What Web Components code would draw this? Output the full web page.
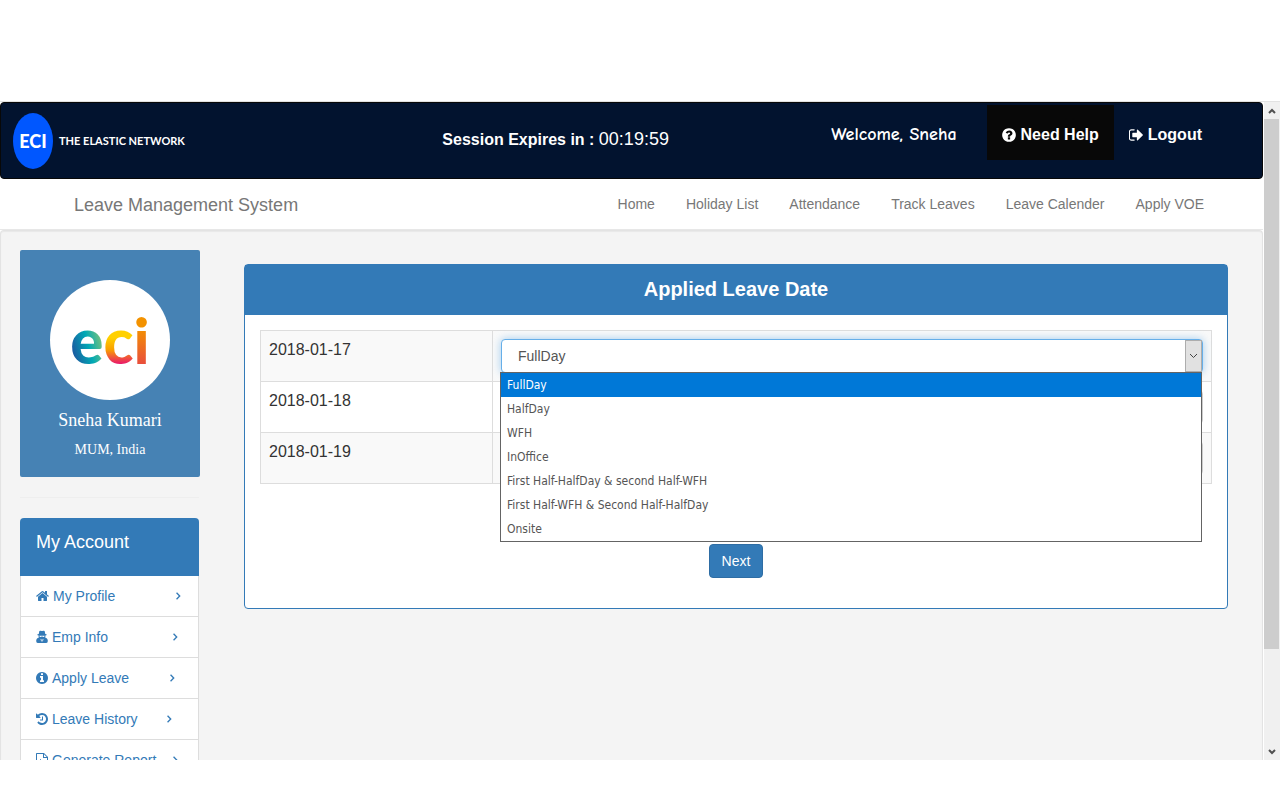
<!DOCTYPE html>
<html lang="en">
<head>
<meta charset="utf-8">
<meta name="viewport" content="width=device-width, initial-scale=1">
<title>Leave Management System</title>
<style>
html, body { margin: 0; height: 100%; background: #fff; }
body { font: 14px/20px "Liberation Sans", Arial, sans-serif; color: #333; }
</style>
</head>
<body>
<app-frame>
  <session-bar></session-bar>
  <main-nav>Leave Management System</main-nav>
  <page-well>
    <profile-card slot="side" name="Sneha Kumari" place="MUM, India"></profile-card>
    <account-menu slot="side">
      <menu-entry icon="home" gap="60">My Profile</menu-entry>
      <menu-entry icon="agent" gap="64">Emp Info</menu-entry>
      <menu-entry icon="info" gap="40">Apply Leave</menu-entry>
      <menu-entry icon="history" gap="28">Leave History</menu-entry>
      <menu-entry icon="file" gap="16">Generate Report</menu-entry>
    </account-menu>
    <title-panel heading="Applied Leave Date">
      <leave-dates></leave-dates>
      <next-button>Next</next-button>
    </title-panel>
  </page-well>
</app-frame>
<script>
const define = (name, render, after) => customElements.define(name, class extends HTMLElement {
  connectedCallback() {
    if (this.shadowRoot) return;
    this.attachShadow({ mode: 'open' }).innerHTML = render(this);
    if (after) after(this.shadowRoot);
  }
});

const disc = 'M1664 896q0 209-103 385.5t-279.5 279.5-385.5 103-385.5-103-279.5-279.5-103-385.5 103-385.5 279.5-279.5 385.5-103 385.5 103 279.5 279.5 103 385.5z';
/* name: [left edge, width, path] on a 1792-unit grid, 128 units to the pixel at 14px */
const icons = {
  help: [128, 1536, 'M1024 1376v-192q0-14-9-23t-23-9h-192q-14 0-23 9t-9 23v192q0 14 9 23t23 9h192q14 0 23-9t9-23zM1280 704q0-88-55.5-163t-138.5-116-170-41q-243 0-371 213-15 24 8 42l132 100q7 6 19 6 16 0 25-12 53-68 86-92 34-24 86-24 48 0 85.5 26t37.5 59q0 38-20 61t-68 45q-63 28-115.5 86.5t-52.5 125.5v36q0 14 9 23t23 9h192q14 0 23-9t9-23q0-19 21.5-49.5t54.5-49.5q32-18 49-28.5t46-35 44.5-48 28-60.5 12.5-81z' + disc],
  logout: [96, 1536, 'M704 1440q0 4 1 20t.5 26.5-3 23.5-10 19.5-20.5 6.5h-320q-119 0-203.500-84.500t-84.500-203.500v-704q0-119 84.500-203.500t203.500-84.500h320q13 0 22.500 9.500t9.500 22.500q0 4 1 20t.5 26.500-3 23.500-10 19.500-20.500 6.500h-320q-66 0-113 47t-47 113v704q0 66 47 113t113 47h312l11.500 1 11.500 3 8 5.500 7 9 2 13.500zM1632 896q0 26-19 45l-544 544q-19 19-45 19t-45-19-19-45v-288h-448q-26 0-45-19t-19-45v-384q0-26 19-45t45-19h448v-288q0-26 19-45t45-19 45 19l544 544q19 19 19 45z'],
  home: [64, 1664, 'M1472 992v480q0 26-19 45t-45 19h-384v-384h-256v384h-384q-26 0-45-19t-19-45v-480q0-1 .5-3t.5-3l575-474 575 474q1 2 1 6zM1695 923l-62 74q-8 9-21 11h-3q-13 0-21-7l-692-577-692 577q-12 8-24 7-13-2-21-11l-62-74q-8-10-7-23.500t11-21.500l719-599q32-26 76-26t76 26l244 204v-195q0-14 9-23t23-9h192q14 0 23 9t9 23v408l219 182q10 8 11 21.500t-7 23.500z'],
  agent: [128, 1536, 'M480 500 L550 150 Q580 60 690 90 L896 130 L1102 90 Q1212 60 1242 150 L1312 500 Q1500 540 1500 600 Q1500 670 1330 700 V870 Q1330 920 1290 960 Q1640 1050 1640 1420 Q1640 1664 1440 1664 H352 Q152 1664 152 1420 Q152 1050 502 960 Q462 920 462 870 V700 Q292 670 292 600 Q292 540 480 500zM560 740Q560 900 720 900Q830 900 850 790H942Q962 900 1072 900Q1232 900 1232 740zM700 1110L800 1520L870 1250zM1092 1110L992 1520L922 1250z'],
  info: [128, 1536, 'M1152 1376v-160q0-14-9-23t-23-9h-96v-512q0-14-9-23t-23-9h-320q-14 0-23 9t-9 23v160q0 14 9 23t23 9h96v320h-96q-14 0-23 9t-9 23v160q0 14 9 23t23 9h448q14 0 23-9t9-23zM1024 480v-160q0-14-9-23t-23-9h-192q-14 0-23 9t-9 23v160q0 14 9 23t23 9h192q14 0 23-9t9-23z' + disc],
  history: [128, 1536, 'M1664 896q0 156-61 298t-164 245-245 164-298 61q-172 0-327-72.500t-264-204.500q-7-10-6.500-22.500t8.500-20.500l137-138q10-9 25-9 16 2 23 12 73 95 179 147t225 52q104 0 198.500-40.500t163.500-109.500 109.500-163.500 40.500-198.500-40.500-198.500-109.500-163.500-163.500-109.500-198.500-40.500q-98 0-188 35.500t-160 101.500l137 138q31 30 14 69-17 40-59 40h-448q-26 0-45-19t-19-45v-448q0-42 40-59 39-17 69 14l130 129q107-101 244.500-156.500t284.500-55.500q156 0 298 61t245 164 164 245 61 298zM1024 608v448q0 14-9 23t-23 9h-320q-14 0-23-9t-9-23v-64q0-14 9-23t23-9h224v-352q0-14 9-23t23-9h64q14 0 23 9t9 23z'],
  file: [128, 1536, 'M224 0H1150L1664 514V1696Q1664 1792 1568 1792H224Q128 1792 128 1696V96Q128 0 224 0zM256 128V1664H1536V640H1024V128zM1152 160V512H1504zM400 1440V1000H528V1440zM640 1440V800H768V1440zM880 1440V1100H1008V1440zM1120 1440V900H1248V1440z'],
  chevron: [512, 768, 'M650 550L770 430L1236 896L770 1362L650 1242L996 896z']
};
const icon = (name, size = 14) => {
  const [x, w, d] = icons[name];
  return `<svg viewBox="${x} 0 ${w} 1792" width="${Math.round(w / 1792 * size)}" height="${size}" fill="currentColor" fill-rule="evenodd" aria-hidden="true"><path d="${d}"/></svg>`;
};

define('app-frame', () => `
  <style>
    :host { display: flex; flex-direction: column; box-sizing: border-box; height: 100vh; padding: 101px 0 40px; }
    .view { flex: 1; min-height: 0; display: grid; grid-template-columns: minmax(0, 1fr) 17px; border-top: 1px solid #e2e2e2; }
    .page { display: flex; flex-direction: column; min-height: 0; overflow: hidden; }
  </style>
  <div class="view"><div class="page"><slot></slot></div><scroll-rail></scroll-rail></div>`);

define('scroll-rail', () => `
  <style>
    :host { display: flex; flex-direction: column; margin-left: 1px; background: #f0f0f0; }
    button { flex: none; height: 17px; padding: 0; border: 0; background: none; display: grid; place-items: center; }
    .track { flex: 1; padding-right: 1px; }
    .thumb { height: 85%; background: #cdcdcd; }
  </style>
  <button aria-label="Scroll up"><svg width="8" height="6"><path d="M1 5L4 2L7 5" fill="none" stroke="#505050" stroke-width="2"/></svg></button>
  <div class="track"><div class="thumb"></div></div>
  <button aria-label="Scroll down"><svg width="8" height="6"><path d="M1 1L4 4L7 1" fill="none" stroke="#505050" stroke-width="2"/></svg></button>`);

define('session-bar', () => `
  <style>
    :host { flex: none; display: grid; grid-template-columns: 35% 1fr auto; box-sizing: border-box; height: 77px;
      border: 1px solid #080808; border-radius: 4px; background: #02132f; color: #fff; }
    .logo { display: flex; align-items: center; gap: 6px; padding-left: 12px; color: #fff; text-decoration: none;
      font: bold 11px/20px Lato, sans-serif; }
    .mark { display: grid; place-items: center; width: 40px; height: 56px; border-radius: 50%; background: #0057ff; font-size: 18px; font-weight: 900; }
    .timer { align-self: center; padding-bottom: 2px; font-weight: bold; font-size: 16px; }
    time { font-weight: normal; font-size: 18px; }
    nav { display: flex; align-items: flex-start; padding: 2px 45px 0 0; font-weight: bold; font-size: 16px; }
    nav > * { display: flex; align-items: center; gap: 5px; height: 55px; padding: 4px 15px 0; box-sizing: border-box; color: #fff; text-decoration: none; }
    .hello { margin-right: 15px; font-family: "Comic Sans MS", "Comic Neue", "Open Sans", sans-serif; font-size: 18px; }
    .help { background: #080808; }
  </style>
  <a class="logo" href="#"><span class="mark">ECI</span><span>THE ELASTIC NETWORK</span></a>
  <div class="timer">Session Expires in : <time>00:19:59</time></div>
  <nav><span class="hello">Welcome, Sneha</span><a class="help" href="#">${icon('help', 16)}Need Help</a><a href="#">${icon('logout', 16)}Logout</a></nav>`);

define('main-nav', () => `
  <style>
    :host { flex: none; display: flex; justify-content: space-between; align-items: center; box-sizing: border-box; height: 51px;
      padding: 0 44px 0 59px; border-bottom: 1px solid #e7e7e7; }
    a { padding: 0 15px; color: #777; text-decoration: none; }
    .brand { padding-top: 2px; font-size: 18px; }
    nav { display: flex; gap: 1px; }
  </style>
  <a class="brand" href="#"><slot></slot></a>
  <nav>${['Home', 'Holiday List', 'Attendance', 'Track Leaves', 'Leave Calender', 'Apply VOE'].map(t => `<a href="#">${t}</a>`).join('')}</nav>`);

define('page-well', () => `
  <style>
    :host { flex: 1; min-height: 0; display: flex; align-items: flex-start; box-sizing: border-box; padding: 19px; overflow: hidden;
      border: 1px solid #e3e3e3; border-bottom: 0; border-radius: 4px 4px 0 0; background: #f4f4f4; box-shadow: inset 0 1px 1px rgba(0,0,0,.05); }
    aside { flex: none; width: 180px; }
    main { flex: 1; min-width: 0; margin: 14px 15px 0 44px; }
  </style>
  <aside><slot name="side"></slot></aside><main><slot></slot></main>`);

define('profile-card', el => `
  <style>
    :host { display: block; padding: 30px 0 17px; border-radius: 2px; background: #4682b4; color: #fff; text-align: center;
      font-family: "Liberation Serif", "Times New Roman", serif; }
    .avatar { display: flex; justify-content: center; align-items: center; box-sizing: border-box; width: 120px; height: 120px; margin: 0 auto 10px;
      border-radius: 50%; background: #fff; font: 900 62px/120px Lato, sans-serif; }
    .avatar span { color: transparent; background-clip: text; -webkit-background-clip: text; }
    .e { background-image: linear-gradient(75deg, #23429a 15%, #00a9b5 50%, #b5cf60 85%); }
    .c { background-image: linear-gradient(#ffd000 48%, #f9a000 58%, #e6007e 72%); }
    .i { background-image: linear-gradient(#f39200 40%, #e94e3c 70%); }
    h2, p { margin: 0; font-weight: normal; line-height: 20px; }
    h2 { font-size: 18px; margin-bottom: 10px; }
    p { font-size: 14px; }
  </style>
  <div class="avatar"><span class="e">e</span><span class="c">c</span><span class="i">i</span></div>
  <h2>${el.getAttribute('name')}</h2><p>${el.getAttribute('place')}</p>`);

define('account-menu', () => `
  <style>
    :host { display: block; margin: 20px 1px 0 0; border-top: 1px solid #eee; padding-top: 20px; }
    h2 { box-sizing: border-box; height: 58px; margin: 0; padding: 14px 16px; border-radius: 4px 4px 0 0; background: #337ab7; color: #fff; font: 18px/20px "Liberation Sans", Arial, sans-serif; }
    nav { border: 1px solid #ddd; border-width: 0 1px; background: #fff; }
  </style>
  <h2>My Account</h2><nav><slot></slot></nav>`);

define('menu-entry', el => `
  <style>
    :host { display: block; border-bottom: 1px solid #ddd; }
    a { display: flex; align-items: center; height: 40px; padding: 0 15px; color: #337ab7; text-decoration: none; white-space: nowrap; }
    span { margin: 0 ${el.getAttribute('gap')}px 0 4px; }
    svg { flex: none; }
  </style>
  <a href="#">${icon(el.getAttribute('icon'))}<span><slot></slot></span>${icon('chevron')}</a>`);

define('title-panel', el => `
  <style>
    :host { display: block; border: 1px solid #337ab7; border-radius: 4px; background: #fff; }
    h1 { margin: 0; padding: 9px 15px 11px; background: #337ab7; color: #fff; text-align: center; font-size: 20px; line-height: 30px; }
    .body { padding: 15px 15px 30px; }
  </style>
  <h1>${el.getAttribute('heading')}</h1><div class="body"><slot></slot></div>`);

const kinds = ['FullDay', 'HalfDay', 'WFH', 'InOffice', 'First Half-HalfDay & second Half-WFH', 'First Half-WFH & Second Half-HalfDay', 'Onsite'];
const esc = t => t.replace(/&/g, '&amp;');
define('leave-dates', () => `
  <style>
    :host { display: block; }
    table { width: 100%; border-collapse: collapse; table-layout: fixed; }
    col:first-child { width: 232px; }
    tr:nth-child(odd) { background: #f9f9f9; }
    th, td { padding: 8px; border: 1px solid #ddd; vertical-align: top; text-align: left; }
    th { font-weight: normal; font-size: 16px; line-height: 22px; }
    .field { position: relative; }
    select { display: block; appearance: none; box-sizing: border-box; width: 100%; height: 34px; margin: 0; padding: 6px 16px; border: 1px solid #ccc;
      border-radius: 4px; background: #fff; color: #555; font: 14px/20px "Liberation Sans", Arial, sans-serif; }
    .open select { border-color: #66afe9; box-shadow: 0 0 8px rgba(102,175,233,.6); }
    .arrow { position: absolute; top: 1px; right: 1px; bottom: 1px; width: 15px; display: grid; place-items: center; border: 1px solid #adadad; background: #e1e1e1; pointer-events: none; }
    ul { position: absolute; z-index: 1; top: 33px; left: -1px; right: 1px; margin: 0; padding: 0; list-style: none; border: 1px solid #646464; background: #fff;
      color: #555; font: 12px/24px Tahoma, "DejaVu Sans Condensed", "Noto Sans", sans-serif; }
    li { padding: 0 6px; }
    li[aria-selected=true] { background: #0078d7; color: #fff; }
  </style>
  <table><colgroup><col><col></colgroup><tbody>${['2018-01-17', '2018-01-18', '2018-01-19'].map((d, i) => `
    <tr><th scope="row"><label for="d${i}">${d}</label></th><td><div class="field${i ? '' : ' open'}">
      <select id="d${i}">${kinds.map(k => `<option>${esc(k)}</option>`).join('')}</select>
      <span class="arrow"><svg width="9" height="6"><path d="M1 1L4.500 4.500L8 1" fill="none" stroke="#444"/></svg></span>
      ${i ? '' : `<ul role="listbox" aria-label="Leave type">${kinds.map((k, n) => `<li role="option" aria-selected="${!n}">${esc(k)}</li>`).join('')}</ul>`}
    </div></td></tr>`).join('')}</tbody></table>`,
  root => {
    const list = root.querySelector('ul'), select = root.querySelector('select');
    list.addEventListener('click', e => {
      const items = [...list.children], n = items.indexOf(e.target);
      if (n < 0) return;
      select.selectedIndex = n;
      items.forEach((li, k) => li.setAttribute('aria-selected', k === n));
    });
  });

define('next-button', () => `
  <style>
    :host { display: flex; justify-content: center; margin-top: 60px; }
    button { height: 34px; padding: 0 12px; border: 1px solid #2e6da4; border-radius: 4px; background: #337ab7; color: #fff; font: 14px/20px "Liberation Sans", Arial, sans-serif; }
  </style>
  <button type="button"><slot></slot></button>`);
</script>
</body>
</html>
